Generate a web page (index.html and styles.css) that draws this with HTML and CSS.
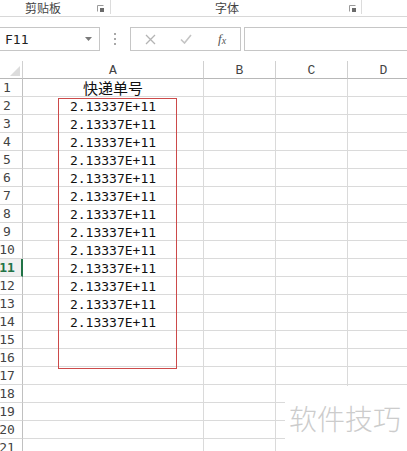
FILE: index.html
```html
<!DOCTYPE html>
<html lang="zh">
<head>
<meta charset="utf-8">
<link rel="stylesheet" href="styles.css">
</head>
<body>
<div class="page">
  <div class="ribbon">
    <div class="group g1">
      <span class="glabel">剪贴板</span>
      <svg class="launcher" width="7" height="7" viewBox="0 0 7 7"><path d="M0.5 6.5V0.5H6.5" fill="none" stroke="#9a9a9a" stroke-width="1"/><rect x="3" y="3" width="4" height="4" fill="#6a6a6a"/></svg>
    </div>
    <div class="group g2">
      <span class="glabel">字体</span>
      <svg class="launcher" width="7" height="7" viewBox="0 0 7 7"><path d="M0.5 6.5V0.5H6.5" fill="none" stroke="#9a9a9a" stroke-width="1"/><rect x="3" y="3" width="4" height="4" fill="#6a6a6a"/></svg>
    </div>
  </div>

  <div class="fbar">
    <div class="namebox">
      <span class="nametext">F11</span>
      <svg class="ddarrow" width="7" height="4" viewBox="0 0 7 4"><path d="M0 0H7L3.5 4Z" fill="#7a7a7a"/></svg>
    </div>
    <div class="dots"><i></i><i></i><i></i></div>
    <div class="fbtns">
      <svg width="11" height="11" viewBox="0 0 11 11"><path d="M1 1L10 10M10 1L1 10" stroke="#b4b4b4" stroke-width="1.3"/></svg>
      <svg width="12" height="10" viewBox="0 0 12 10"><path d="M1 5.5L4.5 9L11 1" fill="none" stroke="#c4c4c4" stroke-width="1.6"/></svg>
      <span class="fx">f<sub>x</sub></span>
    </div>
    <div class="finput"></div>
  </div>

  <div class="sheet">
    <div class="grid">
      <div class="corner"><span class="tri"></span></div>
      <div class="ch">A</div><div class="ch">B</div><div class="ch">C</div><div class="ch">D</div>

      <div class="rh"><span>1</span></div><div class="c ca head">快递单号</div><div class="c"></div><div class="c"></div><div class="c"></div>
      <div class="rh"><span>2</span></div><div class="c ca">2.13337E+11</div><div class="c"></div><div class="c"></div><div class="c"></div>
      <div class="rh"><span>3</span></div><div class="c ca">2.13337E+11</div><div class="c"></div><div class="c"></div><div class="c"></div>
      <div class="rh"><span>4</span></div><div class="c ca">2.13337E+11</div><div class="c"></div><div class="c"></div><div class="c"></div>
      <div class="rh"><span>5</span></div><div class="c ca">2.13337E+11</div><div class="c"></div><div class="c"></div><div class="c"></div>
      <div class="rh"><span>6</span></div><div class="c ca">2.13337E+11</div><div class="c"></div><div class="c"></div><div class="c"></div>
      <div class="rh"><span>7</span></div><div class="c ca">2.13337E+11</div><div class="c"></div><div class="c"></div><div class="c"></div>
      <div class="rh"><span>8</span></div><div class="c ca">2.13337E+11</div><div class="c"></div><div class="c"></div><div class="c"></div>
      <div class="rh"><span>9</span></div><div class="c ca">2.13337E+11</div><div class="c"></div><div class="c"></div><div class="c"></div>
      <div class="rh"><span>10</span></div><div class="c ca">2.13337E+11</div><div class="c"></div><div class="c"></div><div class="c"></div>
      <div class="rh sel"><span>11</span></div><div class="c ca">2.13337E+11</div><div class="c"></div><div class="c"></div><div class="c"></div>
      <div class="rh"><span>12</span></div><div class="c ca">2.13337E+11</div><div class="c"></div><div class="c"></div><div class="c"></div>
      <div class="rh"><span>13</span></div><div class="c ca">2.13337E+11</div><div class="c"></div><div class="c"></div><div class="c"></div>
      <div class="rh"><span>14</span></div><div class="c ca">2.13337E+11</div><div class="c"></div><div class="c"></div><div class="c"></div>
      <div class="rh"><span>15</span></div><div class="c ca"></div><div class="c"></div><div class="c"></div><div class="c"></div>
      <div class="rh"><span>16</span></div><div class="c ca"></div><div class="c"></div><div class="c"></div><div class="c"></div>
      <div class="rh"><span>17</span></div><div class="c ca"></div><div class="c"></div><div class="c"></div><div class="c"></div>
      <div class="rh"><span>18</span></div><div class="c ca"></div><div class="c"></div><div class="c"></div><div class="c"></div>
      <div class="rh"><span>19</span></div><div class="c ca"></div><div class="c"></div><div class="c"></div><div class="c"></div>
      <div class="rh"><span>20</span></div><div class="c ca"></div><div class="c"></div><div class="c"></div><div class="c"></div>
      <div class="rh"><span>21</span></div><div class="c ca"></div><div class="c"></div><div class="c"></div><div class="c"></div>
    </div>
    <div class="redbox"></div>
  </div>

  <div class="watermark">软件技巧</div>
</div>
</body>
</html>
```

FILE: styles.css
```css
* { box-sizing: border-box; }
html, body { margin: 0; padding: 0; background: #fff; }
body { width: 407px; height: 451px; overflow: hidden; }
.page {
  position: relative;
  width: 407px;
  height: 451px;
  overflow: hidden;
  font-family: "DejaVu Sans Mono", "Noto Sans CJK SC", monospace;
}

/* ribbon group labels */
.ribbon {
  display: flex;
  height: 17px;
  border-bottom: 1px solid #d8d8d8;
}
.group {
  display: flex;
  align-items: flex-start;
  height: 14px;
  border-right: 1px solid #dcdcdc;
}
.g1 { width: 111px; padding-left: 25px; padding-right: 6px; }
.g2 { width: 251px; padding-left: 104px; padding-right: 5px; }
.glabel {
  font-family: "Noto Sans CJK SC", sans-serif;
  font-size: 12px;
  line-height: 17px;
  height: 17px;
  color: #444;
  margin-top: -1px;
}
.launcher { margin-left: auto; margin-top: 5px; }

/* formula bar */
.fbar {
  display: flex;
  align-items: stretch;
  height: 24px;
  margin-top: 10px;
}
.namebox {
  width: 102px;
  margin-left: -2px;
  border: 1px solid #c6c6c6;
  display: flex;
  align-items: center;
  padding-left: 6px;
  padding-right: 7px;
}
.nametext { font-size: 13px; color: #222; }
.ddarrow { margin-left: auto; }
.dots {
  width: 30px;
  display: flex;
  flex-direction: column;
  align-items: center;
  justify-content: center;
  gap: 3px;
}
.dots i { display: block; width: 2px; height: 2px; background: #a8a8a8; }
.fbtns {
  width: 111px;
  border: 1px solid #c6c6c6;
  display: flex;
  align-items: center;
  padding-left: 14px;
  gap: 24px;
}
.fx {
  font-family: "Liberation Serif", serif;
  font-style: italic;
  font-size: 13px;
  color: #555;
  margin-left: 2px;
}
.fx sub { font-size: 10px; vertical-align: -1px; }
.finput {
  flex: 1;
  margin-left: 3px;
  margin-right: -2px;
  border: 1px solid #c6c6c6;
}

/* sheet */
.sheet {
  position: relative;
  margin-top: 10px;
}
.grid {
  display: grid;
  grid-template-columns: 23px 181px 72px 72px 72px;
  grid-auto-rows: 18px;
}
.corner, .ch {
  border-right: 1px solid #d0d0d0;
  border-bottom: 1px solid #b8b8b8;
}
.corner { position: relative; }
.tri {
  position: absolute;
  right: 2px;
  bottom: 2px;
  width: 0;
  height: 0;
  border-left: 10px solid transparent;
  border-bottom: 10px solid #dcdcdc;
}
.ch {
  display: flex;
  align-items: center;
  justify-content: center;
  font-family: "Liberation Mono", monospace;
  font-size: 13px;
  color: #444;
  padding-top: 1px;
}
.rh {
  border-right: 1px solid #c0c0c0;
  border-bottom: 1px solid #d8d8d8;
  display: flex;
  align-items: center;
  justify-content: center;
  padding-right: 8px;
  font-size: 13px;
  color: #444;
}
.rh span { white-space: nowrap; }
.rh.sel {
  background: #f0f0f0;
  border-right: 2px solid #217346;
  padding-right: 7px;
  color: #217346;
  font-weight: bold;
}
.c {
  border-right: 1px solid #dadada;
  border-bottom: 1px solid #dadada;
}
.ca {
  display: flex;
  align-items: center;
  justify-content: center;
  font-size: 13px;
  color: #111;
  padding-top: 1px;
}
.ca.head {
  font-family: "Noto Sans CJK SC", sans-serif;
  font-size: 15px;
  padding-top: 0;
}
.redbox {
  position: absolute;
  left: 58px;
  top: 37px;
  width: 119px;
  height: 271px;
  border: 1px solid #cc4a4a;
}

/* watermark overlay */
.watermark {
  position: absolute;
  left: 285px;
  top: 386px;
  right: 0;
  bottom: 0;
  background: #fff;
  padding-left: 4px;
  padding-top: 14px;
  font-family: "Noto Sans CJK SC", sans-serif;
  font-weight: 300;
  font-size: 28px;
  line-height: 36px;
  color: #cccccc;
  white-space: nowrap;
}
```
